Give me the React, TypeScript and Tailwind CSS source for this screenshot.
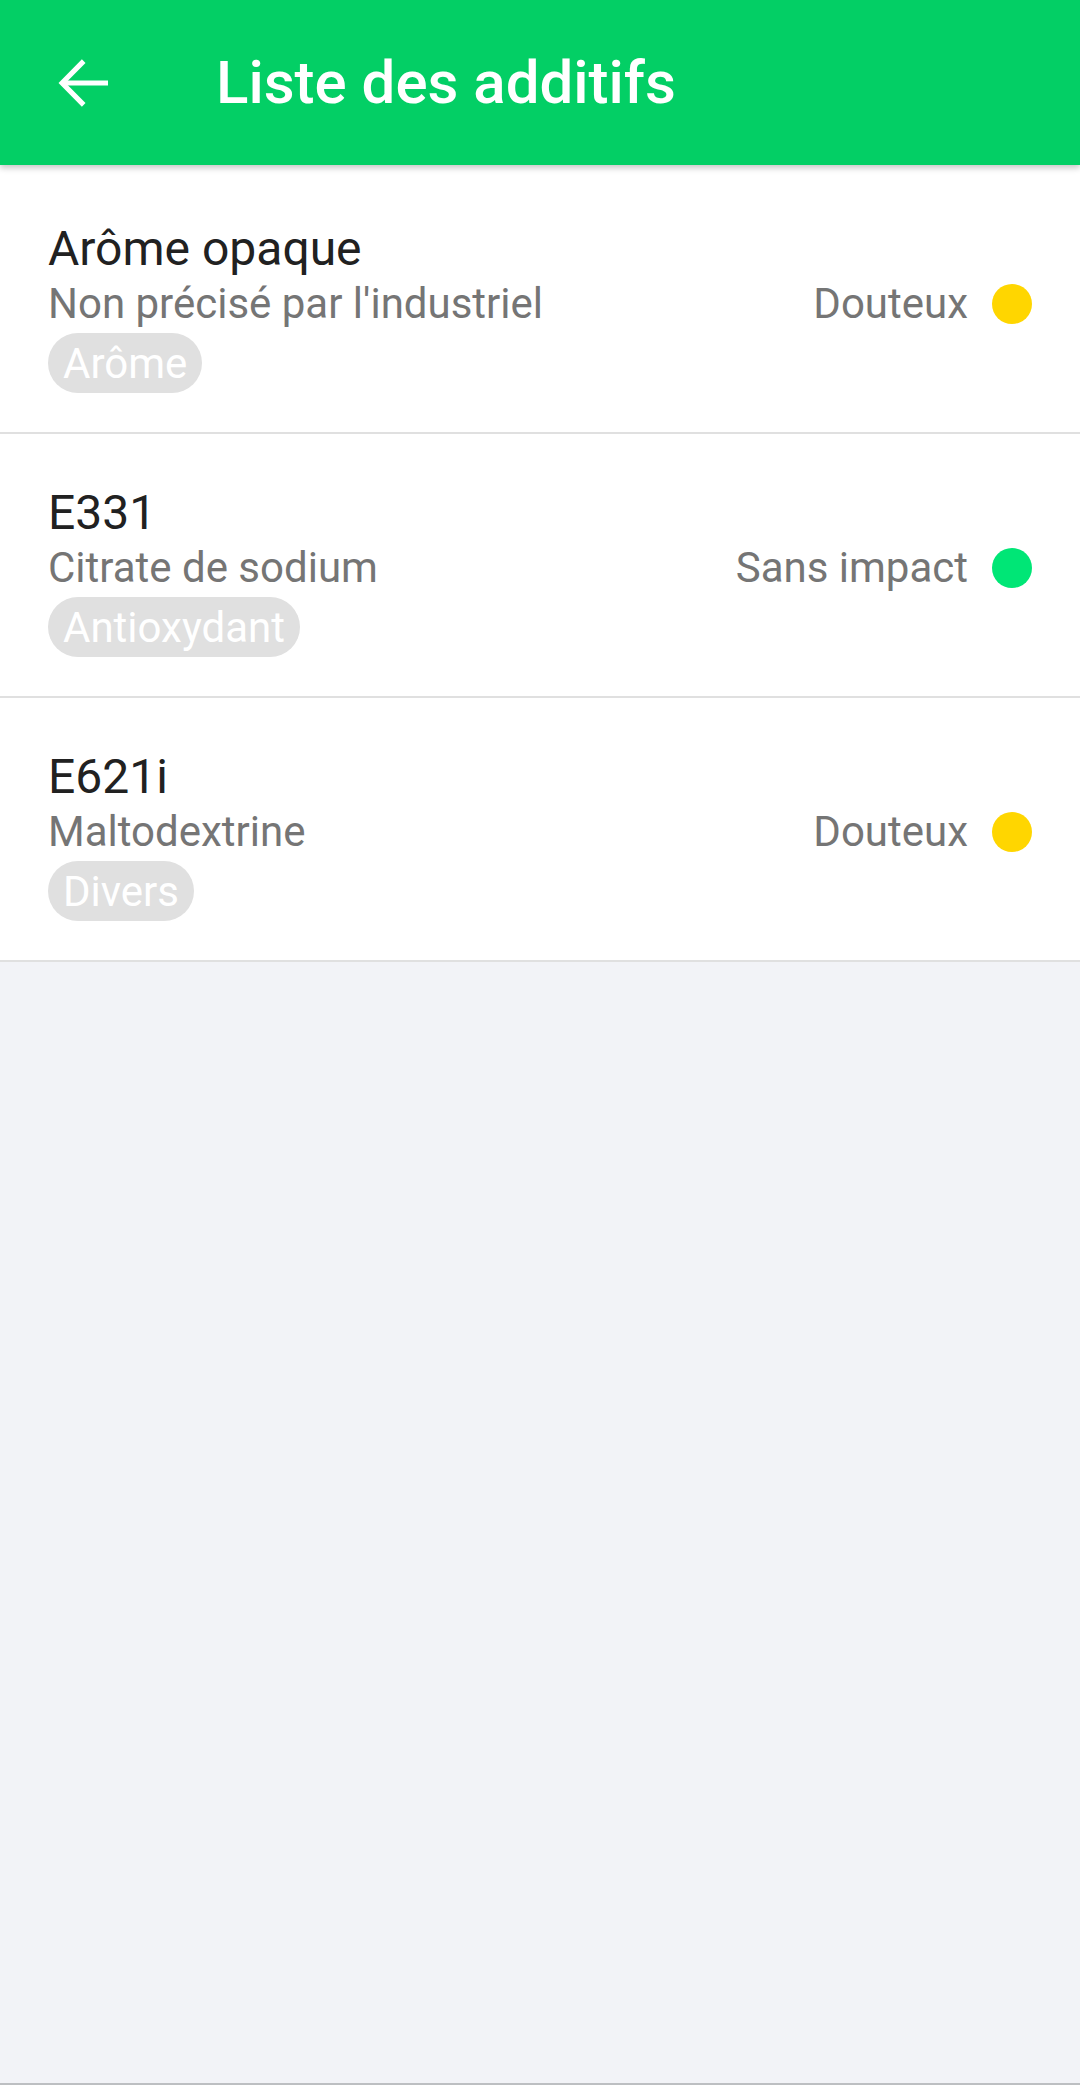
import React from "react"

type Additive = {
    code: string
    name: string
    category: string
    status: string
    dot: string
}

const additives: Additive[] = [
    { code: "Arôme opaque", name: "Non précisé par l'industriel", category: "Arôme", status: "Douteux", dot: "bg-[#ffd600]" },
    { code: "E331", name: "Citrate de sodium", category: "Antioxydant", status: "Sans impact", dot: "bg-[#00e676]" },
    { code: "E621i", name: "Maltodextrine", category: "Divers", status: "Douteux", dot: "bg-[#ffd600]" },
]

function BackArrow() {
    return (
        <svg viewBox="0 0 24 24" className="h-[72px] w-[72px]" fill="none" stroke="white" strokeWidth={1.7}>
            <path d="M20 12H5.2" />
            <path d="M11.9 4.7L4.7 12l7.2 7.3" />
        </svg>
    )
}

function AdditiveRow({ item }: { item: Additive }) {
    return (
        <div className="border-b-2 border-[#e0e0e0] bg-white px-[48px] pt-[51px] pb-[39px]">
            {/* Code */}
            <div className="text-[48px] leading-[56px] text-[#212121]">{item.code}</div>

            {/* Name + status */}
            <div className="mt-[2px] flex items-center justify-between">
                <span className="text-[42px] leading-[50px] text-[#757575]">{item.name}</span>
                <div className="flex items-center gap-[24px]">
                    <span className="text-[42px] leading-[50px] text-[#757575]">{item.status}</span>
                    <span className={`h-[40px] w-[40px] rounded-full ${item.dot}`} />
                </div>
            </div>

            {/* Category chip */}
            <div className="mt-[4px] flex">
                <span className="flex h-[60px] items-center rounded-full bg-[#e0e0e0] px-[15px] text-[42px] text-white">
                    {item.category}
                </span>
            </div>
        </div>
    )
}

export default function App() {
    return (
        <div
            className="flex min-h-[2085px] w-[1080px] flex-col border-b-2 border-[#bdbfc2] bg-[#f2f3f7]"
            style={{ fontFamily: "Roboto, 'Noto Sans', sans-serif" }}
        >
            {/* Toolbar */}
            <header className="relative z-10 flex h-[165px] items-center bg-[#03cf65] shadow-[0_3px_6px_rgba(0,0,0,0.22)]">
                <div className="ml-[48px]">
                    <BackArrow />
                </div>
                <h1 className="ml-[96px] text-[60px] font-medium leading-[70px] text-white">Liste des additifs</h1>
            </header>

            {/* List */}
            <div className="bg-white pt-[5px]">
                {additives.map((item) => (
                    <AdditiveRow key={item.code} item={item} />
                ))}
            </div>
        </div>
    )
}
